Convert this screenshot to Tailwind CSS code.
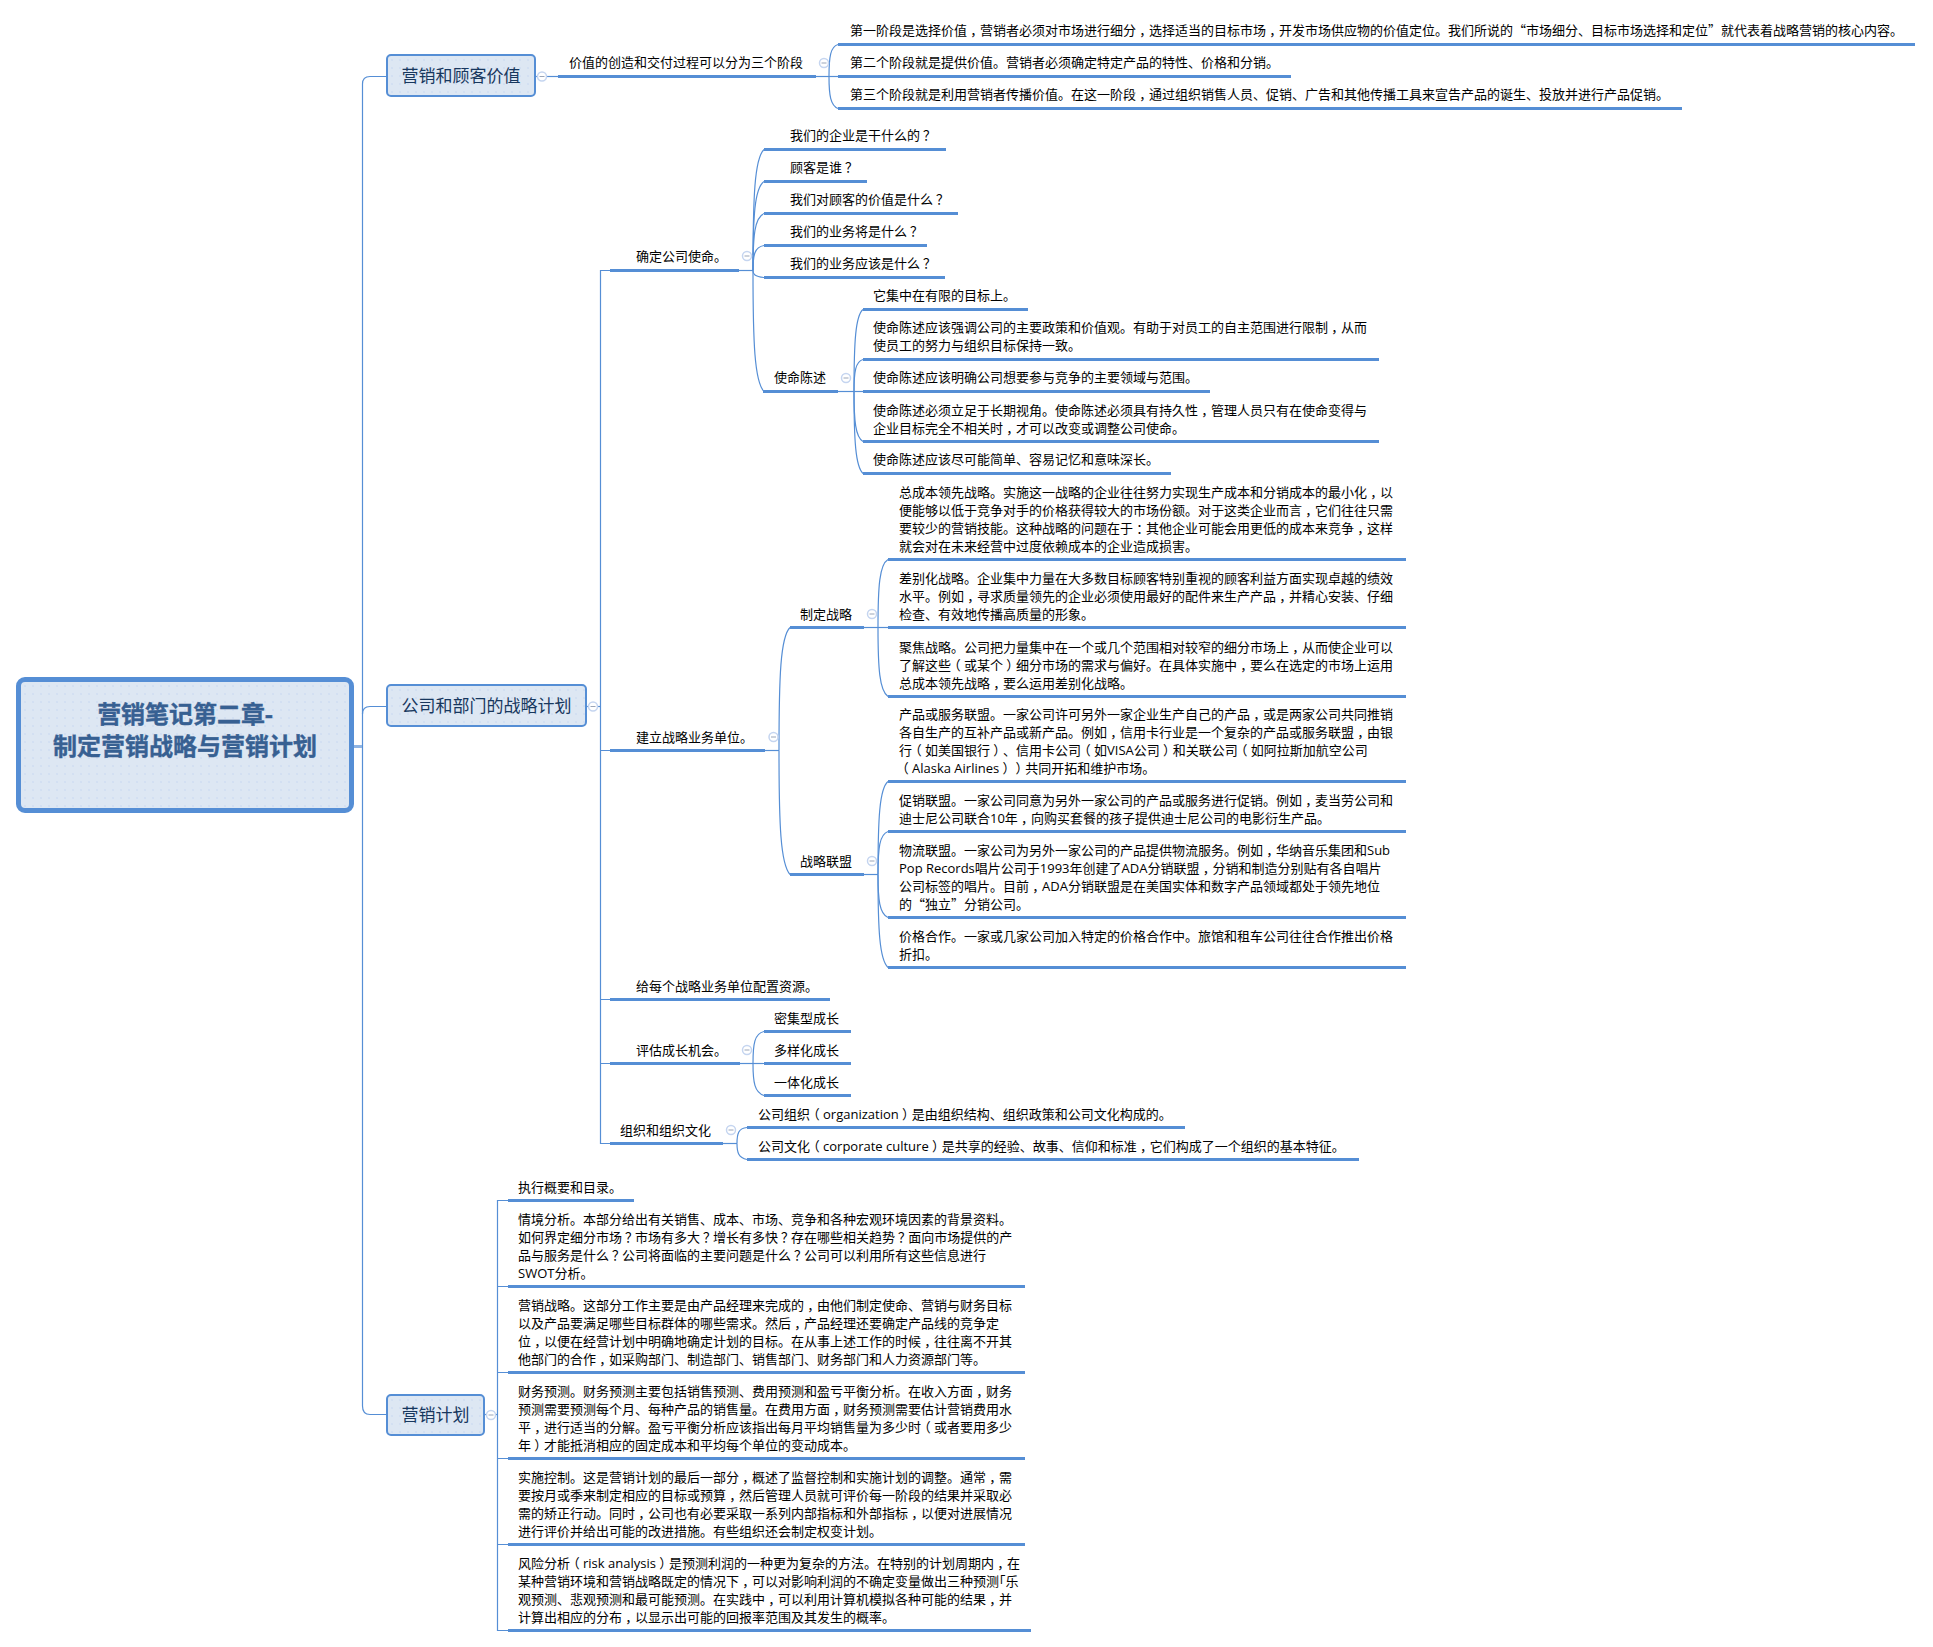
<!doctype html>
<html>

<head>
    <meta charset="UTF-8">
    <title>营销笔记第二章-制定营销战略与营销计划</title>
    <script src="https://cdn.jsdelivr.net/npm/@tailwindcss/browser@4"></script>
</head>

<body class="bg-white">
    <div id="map" class="relative h-[1647px] w-[1933px] overflow-hidden font-['Open_Sans','Noto_Sans_CJK_SC',sans-serif] text-[13px] leading-[18px] text-[#000] [&>div.row]:absolute [&>div.row]:whitespace-nowrap [&>div.row]:border-b-[3px] [&>div.row]:border-[#558ed5] [&>div.row:not(.up)]:pb-[3px] [&>div.up]:-mt-px [&>div.up]:pb-[4px]">
        <svg id="links" class="absolute inset-0" width="1933" height="1647" fill="none" stroke="#558ed5" stroke-width="1.2"></svg>

        <!-- root -->
        <div class="absolute left-[16px] top-[677px] h-[136px] w-[338px] rounded-[9px] border-[5px] border-[#558ed5] bg-[#dde7f3] bg-[radial-gradient(circle,#cddcf1_0.6px,transparent_0.9px)] bg-[length:8px_8px] pt-[16px] text-center text-[24px] font-bold leading-[32px] text-[#376092] [-webkit-text-stroke:0.4px_#376092]">营销笔记第二章-<br>制定营销战略与营销计划</div>

        <!-- main topics -->
        <div class="absolute left-[386px] top-[54px] flex h-[43px] w-[150px] items-center justify-center rounded-[5px] border-2 border-[#558ed5] bg-[#dde7f3] bg-[radial-gradient(circle,#cddcf1_0.6px,transparent_0.9px)] bg-[length:8px_8px] text-[17px] text-[#17375e]">营销和顾客价值</div>
        <div class="absolute left-[386px] top-[684px] flex h-[43px] w-[201px] items-center justify-center rounded-[5px] border-2 border-[#558ed5] bg-[#dde7f3] bg-[radial-gradient(circle,#cddcf1_0.6px,transparent_0.9px)] bg-[length:8px_8px] text-[17px] text-[#17375e]">公司和部门的战略计划</div>
        <div class="absolute left-[386px] top-[1394px] flex h-[42px] w-[99px] items-center justify-center rounded-[5px] border-2 border-[#558ed5] bg-[#dde7f3] bg-[radial-gradient(circle,#cddcf1_0.6px,transparent_0.9px)] bg-[length:8px_8px] text-[17px] text-[#17375e]">营销计划</div>

        <!-- 营销和顾客价值 -->
        <div class="row up left-[558px] top-[54px] w-[258px] pl-[11px]">价值的创造和交付过程可以分为三个阶段</div>
        <div class="row up left-[838px] top-[22px] w-[1077px] pl-[12px]">第一阶段是选择价值，营销者必须对市场进行细分，选择适当的目标市场，开发市场供应物的价值定位。我们所说的“市场细分、目标市场选择和定位”就代表着战略营销的核心内容。</div>
        <div class="row up left-[838px] top-[54px] w-[453px] pl-[12px]">第二个阶段就是提供价值。营销者必须确定特定产品的特性、价格和分销。</div>
        <div class="row up left-[838px] top-[86px] w-[844px] pl-[12px]">第三个阶段就是利用营销者传播价值。在这一阶段，通过组织销售人员、促销、广告和其他传播工具来宣告产品的诞生、投放并进行产品促销。</div>

        <!-- 确定公司使命 -->
        <div class="row up left-[610px] top-[248px] w-[129px] pl-[26px]">确定公司使命。</div>
        <div class="row up left-[764px] top-[127px] w-[182px] pl-[26px]">我们的企业是干什么的？</div>
        <div class="row up left-[764px] top-[159px] w-[103px] pl-[26px]">顾客是谁？</div>
        <div class="row up left-[764px] top-[191px] w-[194px] pl-[26px]">我们对顾客的价值是什么？</div>
        <div class="row up left-[764px] top-[223px] w-[163px] pl-[26px]">我们的业务将是什么？</div>
        <div class="row up left-[764px] top-[255px] w-[181px] pl-[26px]">我们的业务应该是什么？</div>
        <div class="row up left-[763px] top-[369px] w-[75px] pl-[11px]">使命陈述</div>
        <div class="row up left-[863px] top-[287px] w-[165px] pl-[10px]">它集中在有限的目标上。</div>
        <div class="row up left-[863px] top-[319px] w-[516px] pl-[10px]">使命陈述应该强调公司的主要政策和价值观。有助于对员工的自主范围进行限制，从而<br>使员工的努力与组织目标保持一致。</div>
        <div class="row up left-[863px] top-[369px] w-[347px] pl-[10px]">使命陈述应该明确公司想要参与竞争的主要领域与范围。</div>
        <div class="row left-[863px] top-[401px] w-[516px] pl-[10px]">使命陈述必须立足于长期视角。使命陈述必须具有持久性，管理人员只有在使命变得与<br>企业目标完全不相关时，才可以改变或调整公司使命。</div>
        <div class="row up left-[863px] top-[451px] w-[308px] pl-[10px]">使命陈述应该尽可能简单、容易记忆和意味深长。</div>

        <!-- 建立战略业务单位 -->
        <div class="row left-[610px] top-[728px] w-[155px] pl-[26px]">建立战略业务单位。</div>
        <div class="row left-[790px] top-[605px] w-[74px] pl-[10px]">制定战略</div>
        <div class="row left-[888px] top-[483px] w-[518px] pl-[11px]">总成本领先战略。实施这一战略的企业往往努力实现生产成本和分销成本的最小化，以<br>便能够以低于竞争对手的价格获得较大的市场份额。对于这类企业而言，它们往往只需<br>要较少的营销技能。这种战略的问题在于：其他企业可能会用更低的成本来竞争，这样<br>就会对在未来经营中过度依赖成本的企业造成损害。</div>
        <div class="row left-[888px] top-[569px] w-[518px] pl-[11px]">差别化战略。企业集中力量在大多数目标顾客特别重视的顾客利益方面实现卓越的绩效<br>水平。例如，寻求质量领先的企业必须使用最好的配件来生产产品，并精心安装、仔细<br>检查、有效地传播高质量的形象。</div>
        <div class="row left-[888px] top-[638px] w-[518px] pl-[11px]">聚焦战略。公司把力量集中在一个或几个范围相对较窄的细分市场上，从而使企业可以<br>了解这些（或某个）细分市场的需求与偏好。在具体实施中，要么在选定的市场上运用<br>总成本领先战略，要么运用差别化战略。</div>
        <div class="row left-[790px] top-[852px] w-[74px] pl-[10px]">战略联盟</div>
        <div class="row left-[888px] top-[705px] w-[518px] pl-[11px]">产品或服务联盟。一家公司许可另外一家企业生产自己的产品，或是两家公司共同推销<br>各自生产的互补产品或新产品。例如，信用卡行业是一个复杂的产品或服务联盟，由银<br>行（如美国银行）、信用卡公司（如VISA公司）和关联公司（如阿拉斯加航空公司<br>（Alaska Airlines））共同开拓和维护市场。</div>
        <div class="row left-[888px] top-[791px] w-[518px] pl-[11px]">促销联盟。一家公司同意为另外一家公司的产品或服务进行促销。例如，麦当劳公司和<br>迪士尼公司联合10年，向购买套餐的孩子提供迪士尼公司的电影衍生产品。</div>
        <div class="row left-[888px] top-[841px] w-[518px] pl-[11px]">物流联盟。一家公司为另外一家公司的产品提供物流服务。例如，华纳音乐集团和Sub<br>Pop Records唱片公司于1993年创建了ADA分销联盟，分销和制造分别贴有各自唱片<br>公司标签的唱片。目前，ADA分销联盟是在美国实体和数字产品领域都处于领先地位<br>的“独立”分销公司。</div>
        <div class="row left-[888px] top-[927px] w-[518px] pl-[11px]">价格合作。一家或几家公司加入特定的价格合作中。旅馆和租车公司往往合作推出价格<br>折扣。</div>

        <!-- 其余业务单位 -->
        <div class="row left-[610px] top-[977px] w-[220px] pl-[26px]">给每个战略业务单位配置资源。</div>
        <div class="row left-[610px] top-[1041px] w-[130px] pl-[26px]">评估成长机会。</div>
        <div class="row left-[764px] top-[1009px] w-[87px] pl-[10px]">密集型成长</div>
        <div class="row left-[764px] top-[1041px] w-[87px] pl-[10px]">多样化成长</div>
        <div class="row left-[764px] top-[1073px] w-[87px] pl-[10px]">一体化成长</div>
        <div class="row left-[610px] top-[1121px] w-[113px] pl-[10px]">组织和组织文化</div>
        <div class="row left-[747px] top-[1105px] w-[438px] pl-[11px]">公司组织（organization）是由组织结构、组织政策和公司文化构成的。</div>
        <div class="row left-[747px] top-[1137px] w-[612px] pl-[11px]">公司文化（corporate culture）是共享的经验、故事、信仰和标准，它们构成了一个组织的基本特征。</div>

        <!-- 营销计划 -->
        <div class="row left-[508px] top-[1178px] w-[126px] pl-[10px]">执行概要和目录。</div>
        <div class="row left-[508px] top-[1210px] w-[517px] pl-[10px]">情境分析。本部分给出有关销售、成本、市场、竞争和各种宏观环境因素的背景资料。<br>如何界定细分市场？市场有多大？增长有多快？存在哪些相关趋势？面向市场提供的产<br>品与服务是什么？公司将面临的主要问题是什么？公司可以利用所有这些信息进行<br>SWOT分析。</div>
        <div class="row left-[508px] top-[1296px] w-[517px] pl-[10px]">营销战略。这部分工作主要是由产品经理来完成的，由他们制定使命、营销与财务目标<br>以及产品要满足哪些目标群体的哪些需求。然后，产品经理还要确定产品线的竞争定<br>位，以便在经营计划中明确地确定计划的目标。在从事上述工作的时候，往往离不开其<br>他部门的合作，如采购部门、制造部门、销售部门、财务部门和人力资源部门等。</div>
        <div class="row left-[508px] top-[1382px] w-[517px] pl-[10px]">财务预测。财务预测主要包括销售预测、费用预测和盈亏平衡分析。在收入方面，财务<br>预测需要预测每个月、每种产品的销售量。在费用方面，财务预测需要估计营销费用水<br>平，进行适当的分解。盈亏平衡分析应该指出每月平均销售量为多少时（或者要用多少<br>年）才能抵消相应的固定成本和平均每个单位的变动成本。</div>
        <div class="row left-[508px] top-[1468px] w-[517px] pl-[10px]">实施控制。这是营销计划的最后一部分，概述了监督控制和实施计划的调整。通常，需<br>要按月或季来制定相应的目标或预算，然后管理人员就可评价每一阶段的结果并采取必<br>需的矫正行动。同时，公司也有必要采取一系列内部指标和外部指标，以便对进展情况<br>进行评价并给出可能的改进措施。有些组织还会制定权变计划。</div>
        <div class="row left-[508px] top-[1554px] w-[523px] pl-[10px]">风险分析（risk analysis）是预测利润的一种更为复杂的方法。在特别的计划周期内，在<br>某种营销环境和营销战略既定的情况下，可以对影响利润的不确定变量做出三种预测<span class="[font-feature-settings:'halt']">「</span>乐<br>观预测、悲观预测和最可能预测。在实践中，可以利用计算机模拟各种可能的结果，并<br>计算出相应的分布，以显示出可能的回报率范围及其发生的概率。</div>
    </div>

    <script>
        const svg = document.getElementById('links');

        function path(d, attrs) {
            const p = document.createElementNS('http://www.w3.org/2000/svg', 'path');
            p.setAttribute('d', d);
            for (const k in attrs || {}) p.setAttribute(k, attrs[k]);
            svg.appendChild(p);
        }

        // trunk lines of the three main topics
        path('M386 76.5H370Q362.5 76.5 362.5 84V1406Q362.5 1414.5 370 1414.5H387');
        path('M362.5 714Q362.5 706.5 370 706.5H387');
        path('M354 746.5H362', { stroke: '#8fb4e3', 'stroke-width': 3 });
        path('M536 76.5H558');
        path('M587 706.5H600.5');
        path('M485 1414.5H497.5');
        path('M610 270.5H600.5V1143.5H610M600.5 750.5H610M600.5 999.5H610M600.5 1063.5H610');
        path('M508 1200.5H497.5V1630.5H508M497.5 1286.5H508M497.5 1372.5H508M497.5 1458.5H508M497.5 1544.5H508');

        // curved fan from a parent's underline to its children
        function branch(end, mx, py, cx, ys) {
            path(`M${end} ${py + .5}H${ys.includes(py) ? cx : mx}`);
            ys.forEach(cy => {
                if (cy === py) return;
                const dy = cy - py;
                path(`M${mx} ${py + .5}C${mx} ${py + dy * .6} ${mx + 1.5} ${cy - dy * .08} ${cx} ${cy + .5}`);
            });
        }
        branch(816, 829, 76, 838, [44, 76, 108]);
        branch(739, 753, 270, 764, [149, 181, 213, 245, 277, 391]);
        branch(838, 854, 391, 863, [309, 359, 391, 441, 473]);
        branch(765, 779, 750, 790, [627, 874]);
        branch(864, 878, 627, 888, [559, 627, 696]);
        branch(864, 878, 874, 888, [781, 831, 917, 967]);
        branch(740, 753, 1063, 764, [1031, 1063, 1095]);
        branch(723, 737, 1143, 747, [1127, 1159]);

        // collapse buttons
        [[542, 76.5], [824, 63], [593, 706.5], [491, 1415], [747, 256], [846, 378], [773.5, 737], [872, 614], [872, 861], [747, 1050], [731, 1130]].forEach(([x, y]) => {
            const c = document.createElementNS('http://www.w3.org/2000/svg', 'circle');
            c.setAttribute('cx', x);
            c.setAttribute('cy', y);
            c.setAttribute('r', 4.5);
            c.setAttribute('fill', '#fff');
            c.setAttribute('stroke', '#c5d5f0');
            c.setAttribute('stroke-width', 1.5);
            svg.appendChild(c);
            path(`M${x - 2.5} ${y}H${x + 2.5}`, { stroke: '#9aa5b8', 'stroke-width': 1 });
        });

        // the original font centres these full-width marks in their cell, and sets the quotes full width
        const marks = {
            '，': "inline-block w-[13px] text-center [font-feature-settings:'halt']",
            '：': "inline-block w-[13px] text-center [font-feature-settings:'halt']",
            '（': "inline-block w-[13px] text-center [font-feature-settings:'halt']",
            '）': "inline-block w-[13px] text-center [font-feature-settings:'halt']",
            '？': "pl-[3px] tracking-[-3px]",
            '“': "inline-block w-[13px] text-right font-['Noto_Sans_CJK_SC']",
            '”': "inline-block w-[13px] text-left font-['Noto_Sans_CJK_SC']",
        };
        const walker = document.createTreeWalker(document.getElementById('map'), NodeFilter.SHOW_TEXT);
        const texts = [];
        while (walker.nextNode()) texts.push(walker.currentNode);
        texts.forEach(t => {
            if (!/[，？：（）“”]/.test(t.data)) return;
            const box = document.createElement('span');
            box.innerHTML = t.data.replace(/[，？：（）“”]/g, m => `<span class="${marks[m]}">${m}</span>`);
            t.replaceWith(...box.childNodes);
        });
    </script>
</body>

</html>
